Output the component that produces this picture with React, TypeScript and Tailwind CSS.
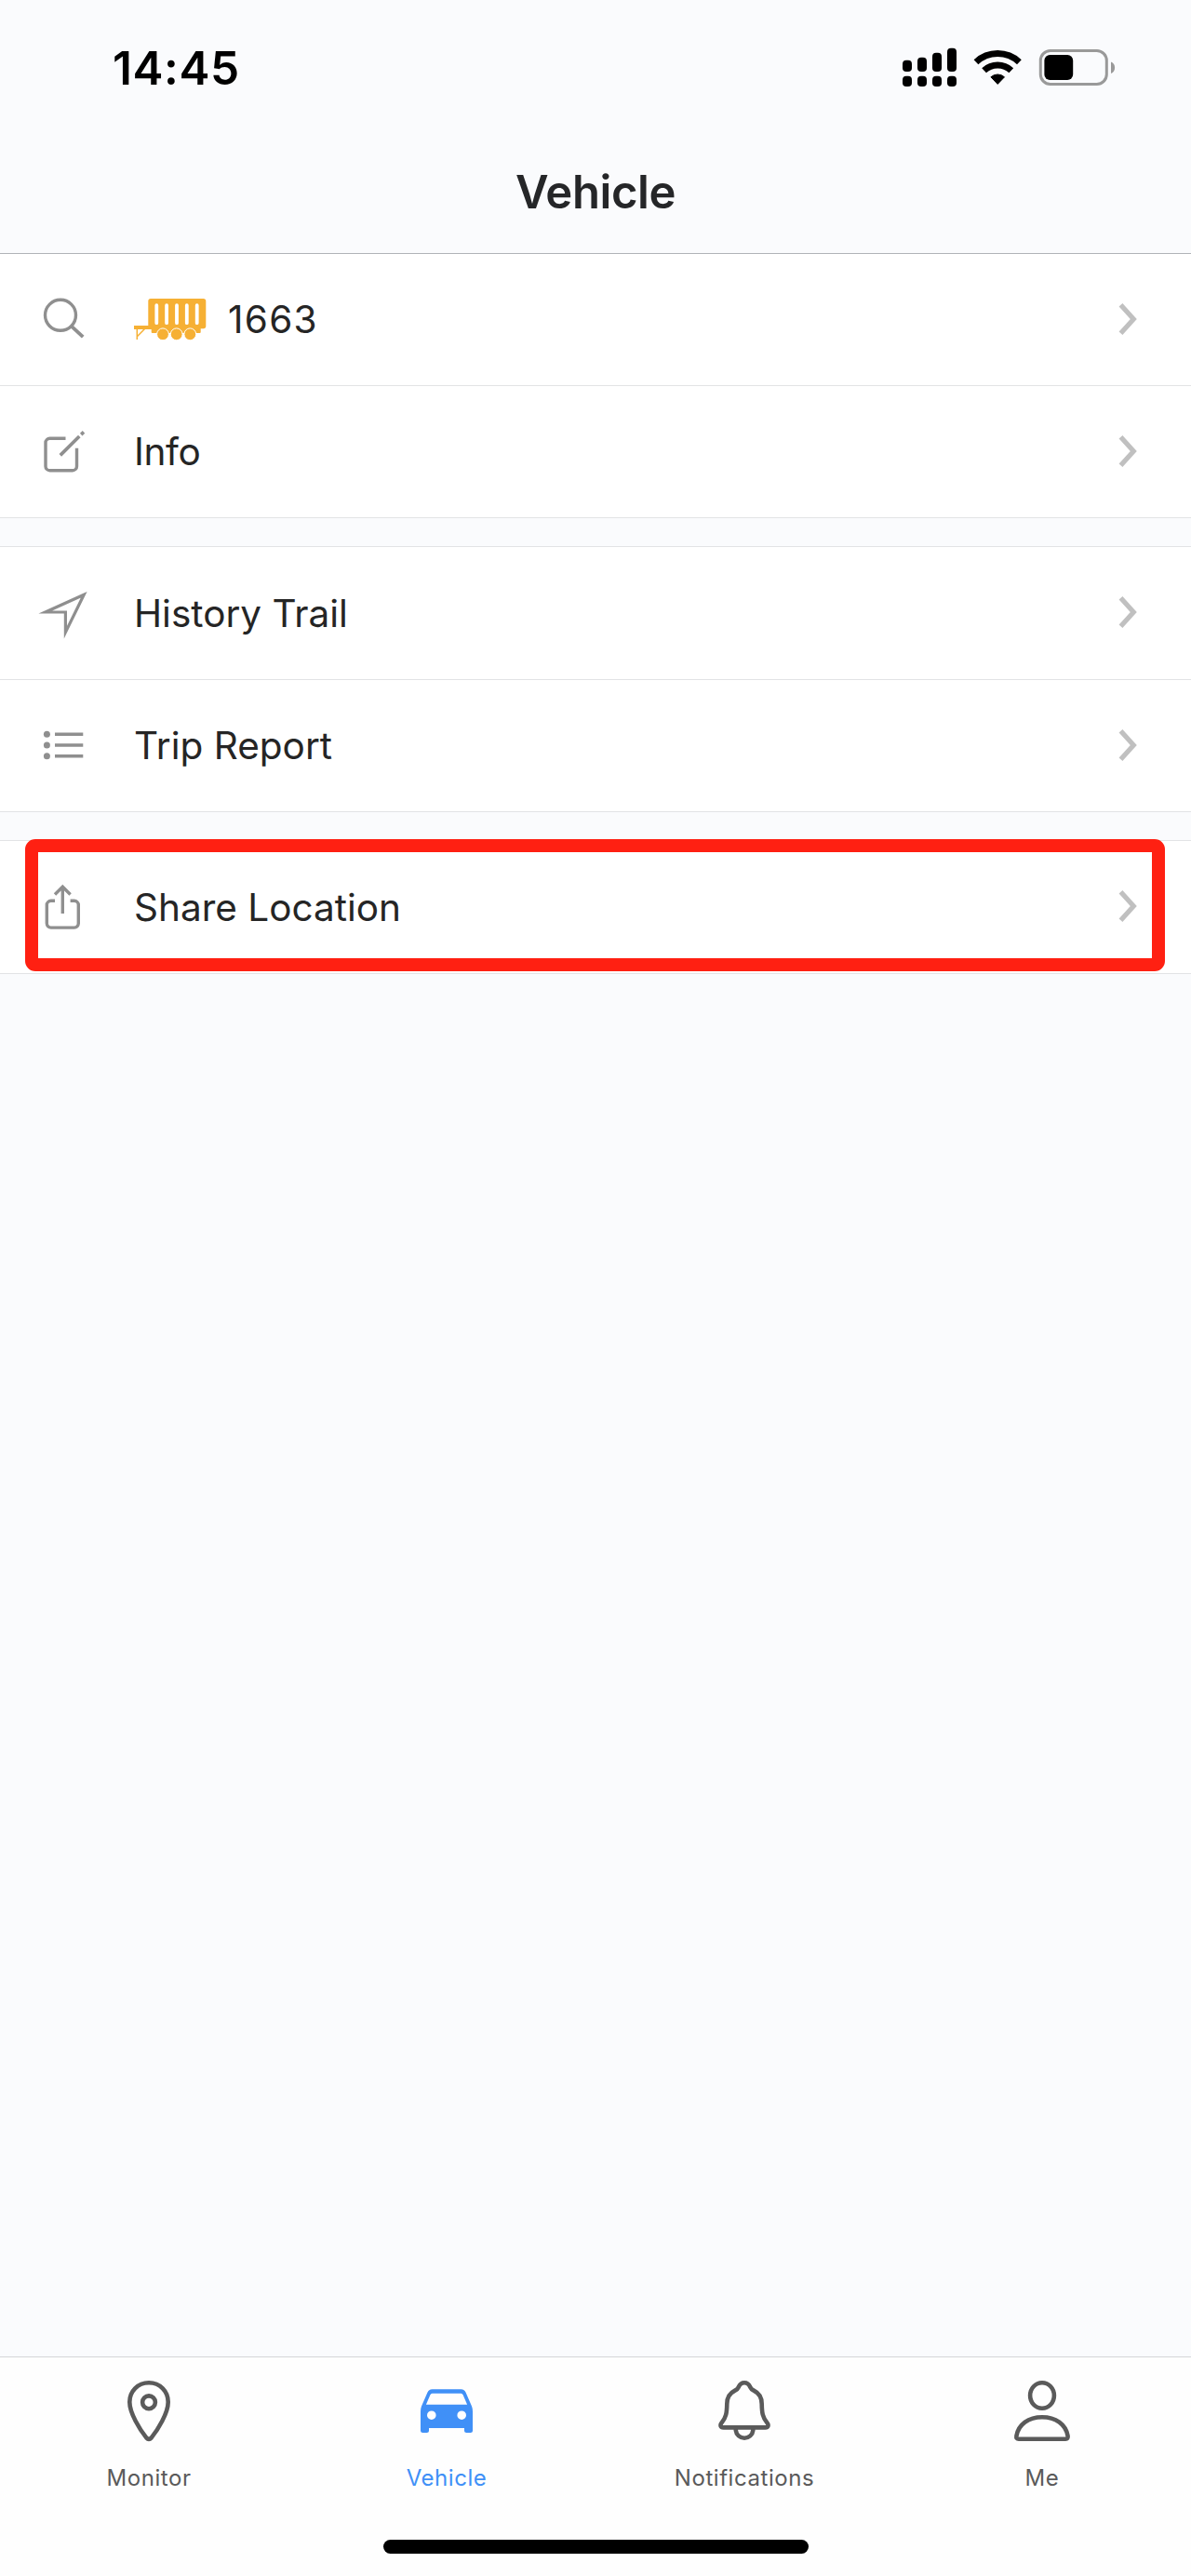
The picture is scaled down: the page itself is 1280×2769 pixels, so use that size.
import type { ReactNode } from "react";

const iconClass = "h-[57px] w-[57px] shrink-0";

function Icon({ children }: { children: ReactNode }) {
  return (
    <svg viewBox="0 0 57 57" className={iconClass} fill="none" stroke="#8f8f8f" strokeWidth="3.4">
      {children}
    </svg>
  );
}

const SearchIcon = () => (
  <Icon>
    <circle cx="25" cy="23.8" r="16.5" />
    <path d="M37 35.8 49.2 47.2" strokeWidth="3.8" />
  </Icon>
);

const EditIcon = () => (
  <Icon>
    <path d="M30.5 14.3H13.5a4.5 4.5 0 0 0-4.5 4.5V44.2a4.5 4.5 0 0 0 4.5 4.5H38a4.5 4.5 0 0 0 4.5-4.5V24.7" />
    <path d="M24.8 32.4 45.3 12M47.2 10.1 50 7.400" strokeWidth="3.6" />
  </Icon>
);

const ArrowIcon = () => (
  <Icon>
    <path d="M50.2 8.2 8.8 27H30.4V48.600Z" strokeWidth="3.2" strokeMiterlimit="10" />
  </Icon>
);

const ListIcon = () => (
  <Icon>
    <path d="M19 16.2H49.3M19 28H49.3M19 39.8H49.3" strokeWidth="3.6" />
    <g fill="#8f8f8f" stroke="none">
      <circle cx="10.4" cy="16.2" r="3.5" />
      <circle cx="10.4" cy="28" r="3.5" />
      <circle cx="10.4" cy="39.8" r="3.5" />
    </g>
  </Icon>
);

const ShareIcon = () => (
  <Icon>
    <path d="M19 21.3H14.8a4.5 4.5 0 0 0-4.5 4.5V45.6a4.5 4.5 0 0 0 4.5 4.5H39.8a4.5 4.5 0 0 0 4.5-4.5V25.8a4.5 4.5 0 0 0-4.5-4.5H35.6" />
    <path d="M27.3 35V6.5M19 14.5 27.3 6.2 35.6 14.5" />
  </Icon>
);

const Trailer = () => (
  <svg viewBox="0 0 78 57" className="mr-[23px] h-[57px] w-[78px] shrink-0" fill="#f6b034">
    <path d="M18 6H74.6a2.7 2.7 0 0 1 2.7 2.7V35.6a2.7 2.7 0 0 1-2.7 2.7H71.7V42a1 1 0 0 1-1 1H19.7a1 1 0 0 1-1-1V39H0V35H15.3V8.7A2.7 2.7 0 0 1 18 6Z" />
    <path d="M3.3 38V50M3.6 46.5 11.5 38.5" stroke="#f6b034" strokeWidth="1.5" />
    <path
      d="M24.3 13.2V32.2M35.1 13.2V32.2M46 13.2V32.2M56.8 13.2V32.2M67.7 13.2V32.2"
      stroke="#fff"
      strokeWidth="3.8"
      strokeLinecap="round"
    />
    <g stroke="#fff" strokeWidth="1">
      <circle cx="31" cy="44.3" r="6.4" />
      <circle cx="45.7" cy="44.3" r="6.4" />
      <circle cx="60.3" cy="44.3" r="6.4" />
    </g>
  </svg>
);

function Row({ icon, label, media, height, spacing = "tracking-normal", children }: {
  icon: ReactNode;
  label: string;
  media?: ReactNode;
  height: string;
  spacing?: string;
  children?: ReactNode;
}) {
  return (
    <div className={`relative flex items-center border-b border-[#e2e3e5] bg-white pr-[56px] pl-[40px] ${height}`}>
      {icon}
      <div className="ml-[47px] flex flex-1 items-center">
        {media}
        <span className={`pt-px text-[40.5px] leading-[48px] whitespace-pre text-[#252525] ${spacing}`}>{label}</span>
      </div>
      <svg viewBox="0 0 24 40" className="h-10 w-6" fill="none" stroke="#c0c0c0" strokeWidth="5.2">
        <path d="M4.5 3.7 18.300 19 4.500 34.300" />
      </svg>
      {children}
    </div>
  );
}

function StatusBar() {
  return (
    <div className="flex h-[144px] items-start justify-between pt-[43px] pr-[80px] pl-[121px]">
      <span className="text-[49.5px] leading-[60px] font-semibold tracking-[0.6px] text-black">14:45</span>
      <div className="flex pt-[7px]">
        <svg viewBox="0 0 60 44" className="h-11 w-[60px]" fill="#000">
          <rect x="0" y="14.7" width="10" height="12.3" rx="4" />
          <rect x="16" y="11.7" width="10" height="15.3" rx="4" />
          <rect x="32" y="6.7" width="10" height="20.3" rx="4" />
          <rect x="48" y="1.7" width="10" height="25.3" rx="4" />
          <rect x="0" y="31.7" width="10" height="11.3" rx="4" />
          <rect x="16" y="31.7" width="10" height="11.3" rx="4" />
          <rect x="32" y="31.7" width="10" height="11.3" rx="4" />
          <rect x="48" y="31.7" width="10" height="11.3" rx="4" />
        </svg>
        <svg viewBox="0 0 64 44" className="ml-[10px] h-11 w-16" fill="none" stroke="#000">
          <path d="M9 16.7A34 34 0 0 1 55.4 16.7" strokeWidth="7" />
          <path d="M17.6 25.8A21.5 21.5 0 0 1 46.8 25.8" strokeWidth="7" />
          <path d="M24.9 32.8A10.9 10.9 0 0 1 39.5 32.8L32.2 40.4Z" fill="#000" strokeWidth="1" strokeLinejoin="round" />
        </svg>
        <svg viewBox="0 0 84 44" className="ml-[12px] h-11 w-[84px]" fill="none">
          <rect x="2.3" y="4.5" width="71" height="36" rx="10.5" stroke="#999" strokeWidth="3" />
          <rect x="6.4" y="9" width="30.8" height="27" rx="6" fill="#000" />
          <path d="M78 16.6C83.5 18.5 83.5 27.1 78 29Z" fill="#999" />
        </svg>
      </div>
    </div>
  );
}

function Tab({ label, active, children }: { label: string; active?: boolean; children: ReactNode }) {
  return (
    <div className={`flex flex-1 flex-col items-center pt-[17px] ${active ? "text-[#4090f7]" : "text-[#5a5a5a]"}`}>
      <svg viewBox="0 0 80 80" className="h-20 w-20" fill="none" stroke="currentColor" strokeWidth="4.6">
        {children}
      </svg>
      <span className="mt-[18px] text-[24px] leading-[30px] tracking-[0.55px]">{label}</span>
    </div>
  );
}

export default function App() {
  return (
    <div className="flex h-[2769px] w-[1280px] flex-col bg-[#fafbfd] font-['Inter',sans-serif]">
      <header className="h-[273px] border-b border-[#b0b3b7]">
        <StatusBar />
        <h1 className="mt-[33px] text-center text-[49px] leading-[60px] font-semibold tracking-[-0.4px] text-[#252628]">Vehicle</h1>
      </header>

      <main className="flex flex-1 flex-col">
        <section>
          <Row icon={<SearchIcon />} label="1663" media={<Trailer />} height="h-[142px]" spacing="tracking-[1.3px]" />
          <Row icon={<EditIcon />} label="Info" height="h-[142px]" spacing="tracking-[-0.4px]" />
        </section>
        <section className="mt-[30px] border-t border-[#e2e3e5]">
          <Row icon={<ArrowIcon />} label="History Trail" height="h-[143px]" />
          <Row icon={<ListIcon />} label="Trip Report" height="h-[142px]" />
        </section>
        <section className="mt-[30px] border-t border-[#e2e3e5]">
          <Row icon={<ShareIcon />} label="Share Location" height="h-[143px]">
            <div className="absolute -top-[2px] left-[27px] h-[142px] w-[1225px] rounded-[11px] border-[14px] border-[#ff2012]" />
          </Row>
        </section>
      </main>

      <nav className="flex h-[236px] flex-col border-t border-[#d5d6d8] bg-[#fefefe]">
        <div className="flex flex-1">
          <Tab label="Monitor">
            <path d="M40 10.3C28 10.3 19.3 19.6 19.3 31C19.3 43 30.5 61 37.3 69.4Q40 72.4 42.7 69.4C49.5 61 60.7 43 60.7 31C60.7 19.6 52 10.3 40 10.3Z" />
            <circle cx="40" cy="31.3" r="6.9" />
          </Tab>
          <Tab label="Vehicle" active>
            <path
              fill="currentColor"
              stroke="none"
              fillRule="evenodd"
              d="M24.5 17.3H55.5Q59.2 17.3 60.6 20.8L67 35.5Q68 38 68 41V61.5Q68 64 65.5 64H61.5Q59 64 59 61.5V59H21V61.5Q21 64 18.5 64H14.5Q12 64 12 61.5V41Q12 38 13 35.5L19.4 20.8Q20.8 17.3 24.5 17.3ZM24.6 21.7Q23 21.7 22.4 23.3L17.9 33.7H62.1L57.6 23.3Q57 21.7 55.4 21.7ZM23.8 40.4A4.8 4.8 0 1 0 23.8 50A4.8 4.8 0 1 0 23.8 40.4ZM56.2 40.4A4.8 4.8 0 1 0 56.2 50A4.8 4.8 0 1 0 56.2 40.4Z"
            />
          </Tab>
          <Tab label="Notifications">
            <path
              strokeLinejoin="round"
              d="M40 10.3C43.3 10.3 45 12.2 46.2 14.8C47 16.8 48.3 17.8 50.5 18.9C56.5 21.8 58.6 26.5 58.7 33C58.9 43 59.5 47 64.3 53.2C66.6 56.2 65.5 58.4 62.5 58.4H17.5C14.5 58.4 13.4 56.2 15.7 53.2C20.5 47 21.1 43 21.3 33C21.4 26.5 23.5 21.8 29.5 18.9C31.7 17.8 33 16.8 33.8 14.8C35 12.2 36.7 10.3 40 10.3Z"
            />
            <path d="M30.8 59V61.5A9.3 9.2 0 0 0 49.3 61.5V59" />
          </Tab>
          <Tab label="Me">
            <ellipse cx="40" cy="24" rx="12.9" ry="13.8" />
            <path d="M12.4 67.5C14.5 55 25.5 47.2 40 47.2S65.5 55 67.6 67.5Q68.1 70.7 65.2 70.7H14.8Q11.9 70.7 12.4 67.5Z" />
          </Tab>
        </div>
        <div className="mb-[24px] h-[15px] w-[457px] self-center rounded-full bg-black" />
      </nav>
    </div>
  );
}
